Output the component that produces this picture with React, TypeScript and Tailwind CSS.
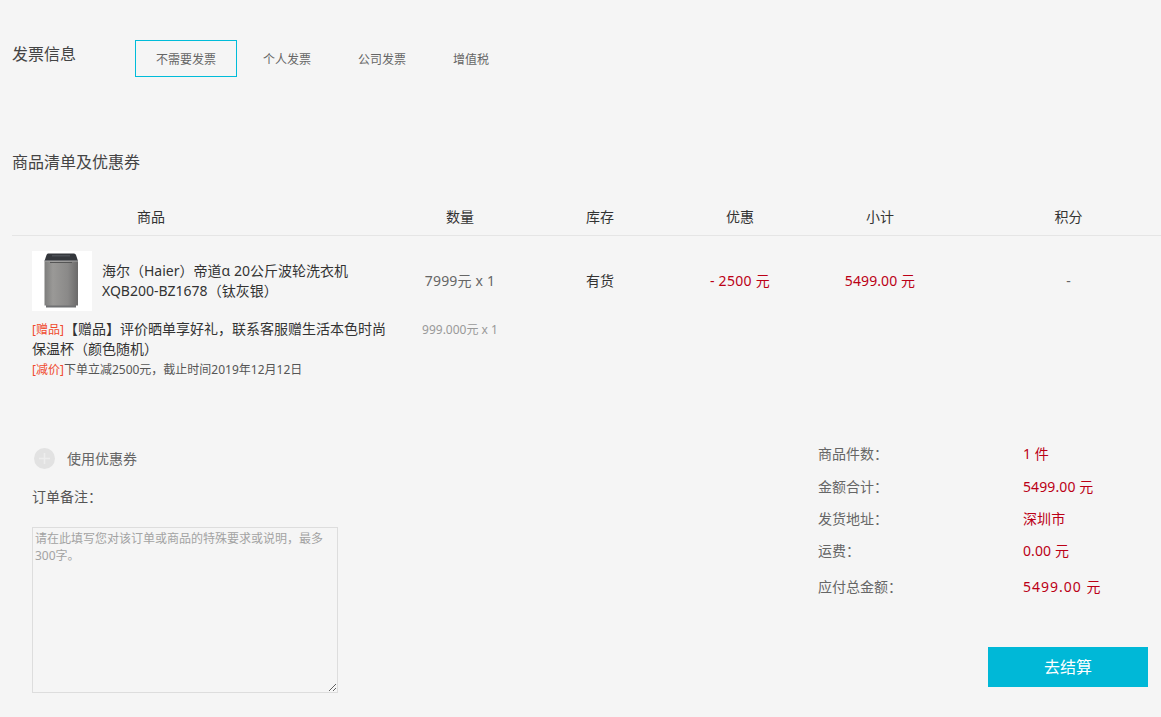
const TABS = ["不需要发票", "个人发票", "公司发票", "增值税"];

const HEADERS = [
  { label: "商品", className: "pr-[100px]" },
  { label: "数量", className: "" },
  { label: "库存", className: "" },
  { label: "优惠", className: "" },
  { label: "小计", className: "" },
  { label: "积分", className: "pl-[26px]" },
];

const SUMMARY = [
  { label: "商品件数：", value: "1 件", rowClass: "h-[33px]" },
  { label: "金额合计：", value: "5499.00 元", rowClass: "h-[32px]" },
  { label: "发货地址：", value: "深圳市", rowClass: "h-[32px]" },
  { label: "运费：", value: "0.00 元", rowClass: "h-[32px]" },
];

function WasherImage() {
  return (
    <svg viewBox="0 0 60 60" className="h-[60px] w-[60px] shrink-0 bg-white">
      <defs>
        <linearGradient id="washerBody" x1="0" y1="0" x2="1" y2="0">
          <stop offset="0" stopColor="#7d7d7c" />
          <stop offset="0.25" stopColor="#9a9997" />
          <stop offset="0.7" stopColor="#8a8988" />
          <stop offset="1" stopColor="#6a6969" />
        </linearGradient>
      </defs>
      <rect x="14" y="54" width="30" height="2.500" fill="#6f7072" />
      <path d="M12.500 10h33.500v44.500H12.500z" fill="url(#washerBody)" />
      <path d="M16 2.500h26q1.500 0 2 1.500l2 6H12.500l2-6q.5-1.500 1.500-1.500z" fill="#34373c" />
      <rect x="20" y="4" width="18" height="1.500" fill="#4b4f55" />
      <rect x="12.500" y="9.500" width="33.500" height="1" fill="#a8a8a8" />
      <rect x="18" y="11" width="22" height="1" fill="#555555" />
    </svg>
  );
}

export default function App() {
  return (
    <div className="min-h-[717px] overflow-hidden bg-[#f5f5f5] font-['Noto_Sans','Noto_Sans_CJK_SC',sans-serif] text-[14px] text-[#333]">
      {/* Invoice */}
      <div className="flex pl-[12px] pt-[40px]">
        <h2 className="w-[123px] text-[16px] leading-[28px] text-[#444]">发票信息</h2>
        <div className="flex gap-[5px]">
          {TABS.map((tab, i) => (
            <button
              key={tab}
              type="button"
              className={`h-[37px] border px-[20px] pt-[2px] text-[12px] text-[#666] ${
                i === 0 ? "border-[#00bcd9]" : "border-transparent"
              }`}
            >
              {tab}
            </button>
          ))}
        </div>
      </div>

      {/* Goods list */}
      <h2 className="ml-[12px] mt-[73px] text-[16px] leading-[24px] text-[#444]">商品清单及优惠券</h2>
      <div className="ml-[12px] mt-[26px] grid h-[36px] grid-cols-[378px_140px_140px_140px_140px_1fr] items-center border-b border-[#e5e5e5] pb-[2px] text-center">
        {HEADERS.map((h) => (
          <div key={h.label} className={h.className}>
            {h.label}
          </div>
        ))}
      </div>

      <div className="ml-[12px] mt-[15px] grid h-[60px] grid-cols-[378px_140px_140px_140px_140px_1fr] items-center text-center">
        <div className="flex items-center pl-[20px] text-left">
          <WasherImage />
          <p className="ml-[10px] leading-[20px]">
            海尔（Haier）帝道α 20公斤波轮洗衣机
            <br />
            XQB200-BZ1678（钛灰银）
          </p>
        </div>
        <div className="pb-[2px] tracking-[0.2px] text-[#666]">7999元 x 1</div>
        <div className="pb-[2px]">有货</div>
        <div className="pb-[2px] tracking-[0.3px] text-[#bb0016]">- 2500 元</div>
        <div className="pb-[2px] tracking-[0.1px] text-[#bb0016]">5499.00 元</div>
        <div className="pb-[2px] pl-[26px] text-[#666]">-</div>
      </div>

      <div className="ml-[12px] mt-[8px] grid grid-cols-[378px_140px] text-center">
        <p className="pl-[20px] text-left leading-[19px]">
          <span className="text-[12px] text-[#f04a2e]">[赠品]</span>【赠品】评价晒单享好礼，联系客服赠生活本色时尚保温杯（颜色随机）
        </p>
        <div className="pt-[1px] text-[12px] leading-[19px] text-[#999]">999.000元 x 1</div>
      </div>
      <p className="ml-[32px] mt-[2px] text-[12px] leading-[20px] text-[#555]">
        <span className="text-[#f04a2e]">[减价]</span>下单立减2500元，截止时间2019年12月12日
      </p>

      {/* Coupon, note and totals */}
      <div className="mt-[68px] flex justify-between pr-[13px]">
        <div className="pl-[32px]">
          <div className="flex h-[21px] items-center pl-[2px]">
            <span className="flex h-[21px] w-[21px] items-center justify-center rounded-full bg-[#e2e2e2]">
              <svg viewBox="0 0 11 11" className="h-[11px] w-[11px]">
                <path d="M5.500 0v11M0 5.500h11" stroke="#ededed" strokeWidth="1.500" />
              </svg>
            </span>
            <span className="ml-[12px] text-[#666]">使用优惠券</span>
          </div>
          <div className="mt-[18px] leading-[20px] text-[#555]">订单备注：</div>
          <textarea
            placeholder="请在此填写您对该订单或商品的特殊要求或说明，最多300字。"
            className="mt-[20px] block h-[166px] w-[306px] border border-[#ddd] px-[2px] py-[2px] text-[12px] leading-[17px] outline-none placeholder:text-[#a3a3a3]"
          />
        </div>

        <div className="-mt-[11px] w-[330px]">
          {SUMMARY.map((row) => (
            <div key={row.label} className={`flex items-center ${row.rowClass}`}>
              <span className="w-[205px] text-[#666]">{row.label}</span>
              <span className="tracking-[0.1px] text-[#bb0016]">{row.value}</span>
            </div>
          ))}
          <div className="flex h-[40px] items-center">
            <span className="w-[205px] text-[#666]">应付总金额：</span>
            <span className="text-[14px] tracking-[1px] text-[#bb0016]">5499.00 元</span>
          </div>
          <button
            type="button"
            className="ml-[170px] mt-[41px] block h-[40px] w-[160px] bg-[#00b8d7] text-[16px] text-white"
          >
            去结算
          </button>
        </div>
      </div>
    </div>
  );
}
